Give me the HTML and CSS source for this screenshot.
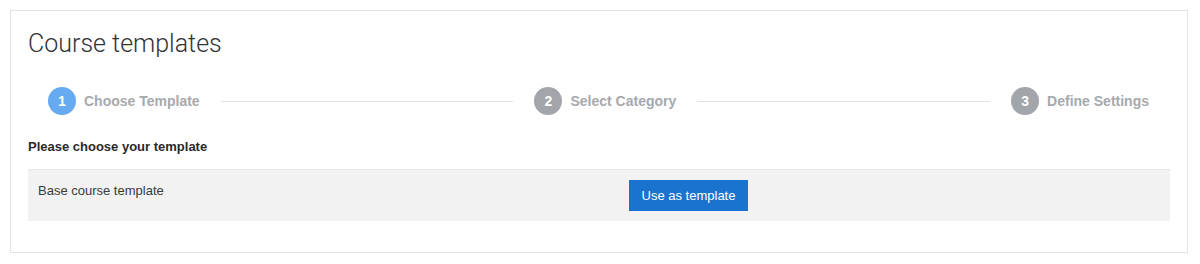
FILE: index.html
```html
<!DOCTYPE html>
<html>
<head>
    <title>Course templates</title>
    <link rel="stylesheet" href="styles.css">
</head>
<body>

<div class="card">
    <h1>Course templates</h1>

    <div class="stepper">
        <div class="step active">
            <span class="step-num">1</span>
            <span class="step-label">Choose Template</span>
        </div>
        <div class="step-line"></div>
        <div class="step">
            <span class="step-num">2</span>
            <span class="step-label">Select Category</span>
        </div>
        <div class="step-line"></div>
        <div class="step">
            <span class="step-num">3</span>
            <span class="step-label">Define Settings</span>
        </div>
    </div>

    <h2>Please choose your template</h2>

    <div class="template-row">
        <div class="template-name">Base course template</div>
        <div class="template-action">
            <button class="btn-primary">Use as template</button>
        </div>
    </div>
</div>

</body>
</html>
```

FILE: styles.css
```css
body {
    font-family: "Liberation Sans", Arial, sans-serif;
    color: #1d2125;
    background-color: #fff;
    margin: 0;
    padding: 10px 12px 10px 10px;
}

.card {
    border: 1px solid #e3e3e3;
    padding: 17px 17px 31px 17px;
    height: 243px;
    box-sizing: border-box;
}

h1 {
    font-family: Roboto, "Liberation Sans", sans-serif;
    font-weight: 300;
    font-size: 25px;
    color: #333;
    margin: 0 0 27px;
    line-height: 32px;
}

.stepper {
    display: flex;
    align-items: center;
    gap: 21px;
    padding: 0 21px 0 20px;
    height: 28px;
}

.step {
    display: flex;
    align-items: center;
    gap: 8px;
}

.step-num {
    width: 28px;
    height: 28px;
    border-radius: 50%;
    background-color: #a2a5a9;
    color: #fff;
    font-size: 14px;
    font-weight: bold;
    display: flex;
    align-items: center;
    justify-content: center;
}

.step.active .step-num {
    background-color: #66aaf2;
}

.step-label {
    font-size: 14px;
    font-weight: bold;
    color: #a6a9ad;
}

.step-line {
    flex: 1;
    height: 1px;
    background-color: #e2e2e2;
}

h2 {
    font-size: 13px;
    font-weight: bold;
    color: #2a2a2a;
    margin: 24px 0 15px;
}

.template-row {
    display: grid;
    grid-template-columns: 591px 1fr;
    background-color: #f2f2f2;
    border-top: 1px solid #e8e8e8;
    padding: 10px 10px 10px;
    height: 52px;
    box-sizing: border-box;
    font-size: 13px;
    color: #3a3a3a;
}

.template-name {
    padding-top: 3px;
}

.btn-primary {
    background-color: #1a73cf;
    color: #fff;
    border: none;
    font-family: "Liberation Sans", Arial, sans-serif;
    font-size: 13px;
    padding: 0 12px;
    height: 31px;
    width: 119px;
    cursor: pointer;
}
```
